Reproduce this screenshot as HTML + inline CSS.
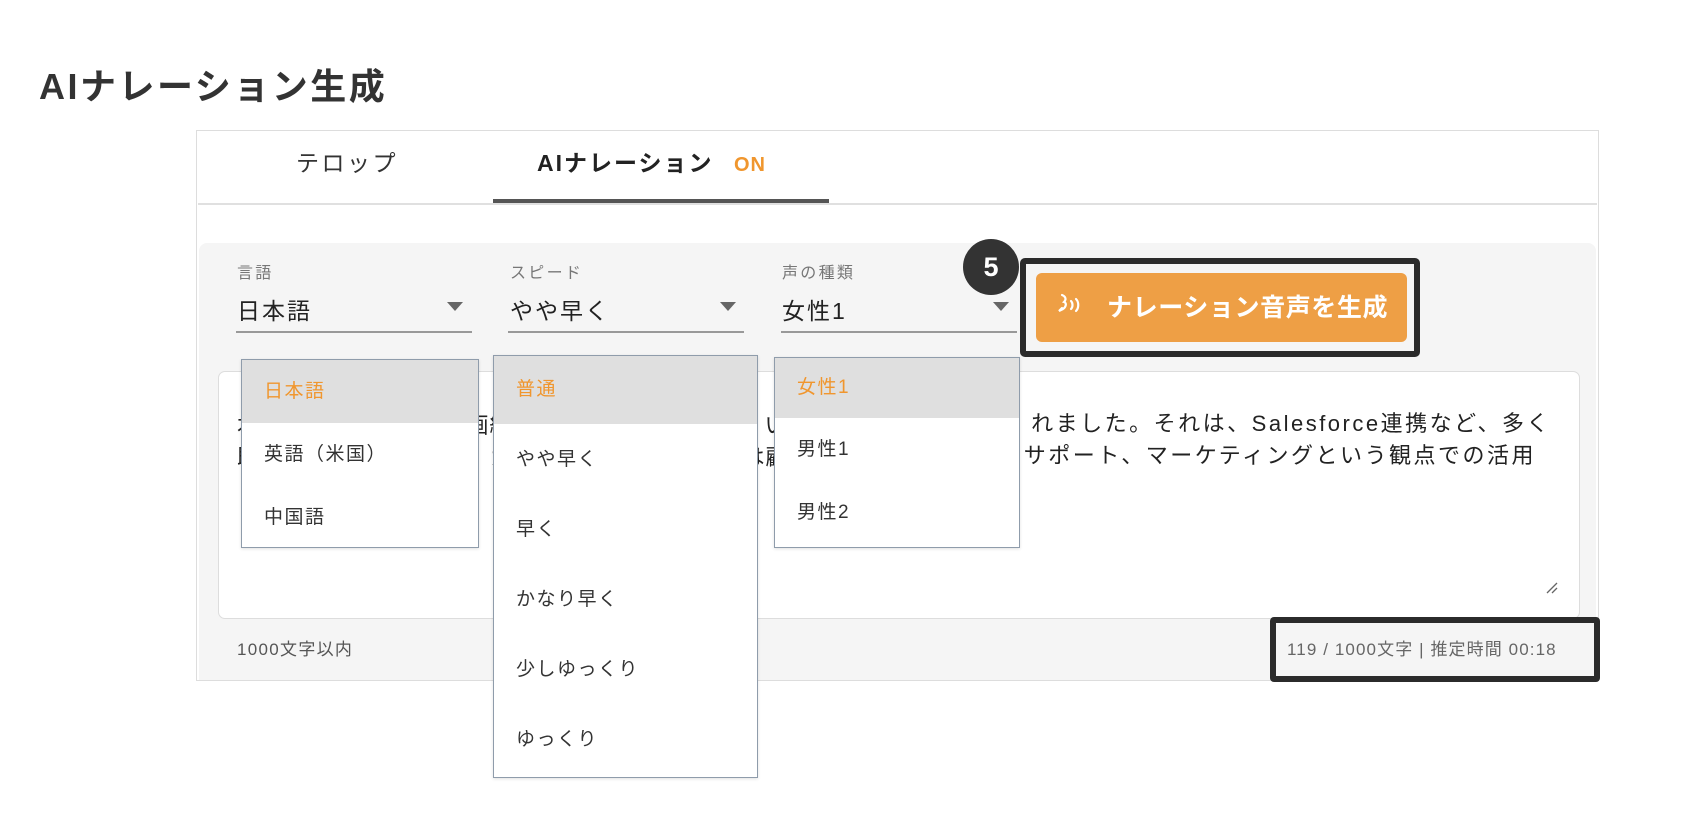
<!DOCTYPE html>
<html><head><meta charset="utf-8"><style>
*{box-sizing:border-box;margin:0;padding:0}
body{width:1694px;height:838px;background:#fff;position:relative;overflow:hidden;font-family:"Liberation Sans","Noto Sans CJK JP",sans-serif;color:#333}
.a{position:absolute;white-space:nowrap}
.dd{position:absolute;background:#fff;border:1px solid #8f9cab;box-shadow:0 1px 3px rgba(0,0,0,.12)}
.dd div{height:63px;line-height:63px;padding-left:22px;font-size:19px;letter-spacing:1.5px;color:#333}
.dd div.s{background:#dfdfdf;color:#f0962e}
.lbl{font-size:16px;color:#777;letter-spacing:2.3px}
.val{font-size:23px;color:#222;letter-spacing:2px}
.ul{position:absolute;height:2px;background:#999}
.tri{position:absolute;width:0;height:0;border-left:8px solid transparent;border-right:8px solid transparent;border-top:9px solid #666}
.tx{font-size:22px;color:#222;letter-spacing:1px}
.tr{font-size:22px;color:#222;letter-spacing:2.5px}
</style></head><body>
<div class="a" style="left:39px;top:58px;font-size:36px;font-weight:bold;color:#333;letter-spacing:2.5px">AIナレーション生成</div>

<div class="a" style="left:196px;top:130px;width:1403px;height:551px;border:1px solid #ddd"></div>
<div class="a" style="left:198px;top:203px;width:1399px;height:2px;background:#e0e0e0"></div>
<div class="a" style="left:296px;top:144px;font-size:23px;letter-spacing:2.5px">テロップ</div>
<div class="a" style="left:537px;top:144px;font-size:23px;font-weight:bold;color:#222;letter-spacing:2px">AIナレーション <span style="color:#f0962e;margin-left:12px;font-size:20px;letter-spacing:1px">ON</span></div>
<div class="a" style="left:493px;top:199px;width:336px;height:4px;background:#555"></div>

<div class="a" style="left:199px;top:243px;width:1397px;height:437px;background:#f5f5f5;border-radius:8px 8px 0 0"></div>

<div class="a lbl" style="left:237px;top:259px">言語</div>
<div class="a val" style="left:237px;top:292px">日本語</div>
<div class="ul" style="left:236px;top:331px;width:236px"></div>
<div class="tri" style="left:447px;top:302px"></div>

<div class="a lbl" style="left:510px;top:259px">スピード</div>
<div class="a val" style="left:510px;top:292px">やや早く</div>
<div class="ul" style="left:508px;top:331px;width:236px"></div>
<div class="tri" style="left:720px;top:302px"></div>

<div class="a lbl" style="left:782px;top:259px">声の種類</div>
<div class="a val" style="left:782px;top:292px">女性1</div>
<div class="ul" style="left:781px;top:331px;width:236px"></div>
<div class="tri" style="left:993px;top:302px"></div>

<div class="a" style="left:1020px;top:258px;width:400px;height:99px;border:6px solid #2b2b2b;border-radius:5px"></div>
<div class="a" style="left:1036px;top:273px;width:371px;height:69px;background:#ee9f45;border-radius:6px"></div>
<svg class="a" style="left:1056px;top:293px" width="32" height="24" viewBox="0 0 32 24" fill="none" stroke="#fff" stroke-width="2.2" stroke-linecap="round">
<path d="M6 2c3 1 5 4 2 7 3 1 2 5-1 7l-4 2 3-3"/><path d="M15 8c2 2 2 6 0 8"/><path d="M20 6c3 3 3 9 0 12"/></svg>
<div class="a" style="left:1107px;top:288px;font-size:25px;font-weight:bold;color:#fff;letter-spacing:0.6px">ナレーション音声を生成</div>

<div class="a" style="left:963px;top:239px;width:56px;height:56px;border-radius:50%;background:#333;color:#fff;font-size:27px;font-weight:bold;text-align:center;line-height:56px">5</div>

<div class="a" style="left:218px;top:371px;width:1362px;height:248px;background:#fff;border:1px solid #ddd;border-radius:7px"></div>
<div class="a tx" style="left:237px;top:408px">本日弊社より新しい動画編集機能がリリースされ、いち早く利用されました</div>
<div class="a tx" style="left:237px;top:440px">既に多くの企業におい、カスタマーサクセスなどは顧客対応、サ</div>
<div class="a tx" style="left:237px;top:472px">ます。</div>
<div class="a" style="left:1020px;top:400px;width:40px;height:80px;background:#fff"></div>
<div class="a tr" style="right:143px;top:406px;background:#fff;padding-left:2px">れました。それは、Salesforce連携など、多く</div>
<div class="a tr" style="right:158px;top:438px;background:#fff;padding-left:2px">サポート、マーケティングという観点での活用</div>
<svg class="a" style="left:1545px;top:581px" width="14" height="14"><path d="M2 12L12 2M7 12L12 7" stroke="#666" stroke-width="1.3"/></svg>

<div class="a" style="left:237px;top:635px;font-size:17px;color:#555;letter-spacing:1.3px">1000文字以内</div>
<div class="a" style="left:1270px;top:617px;width:330px;height:65px;border:6px solid #2b2b2b;border-radius:4px"></div>
<div class="a" style="left:1287px;top:635px;font-size:17px;color:#666;letter-spacing:1.1px">119 / 1000文字 | 推定時間 00:18</div>

<div class="dd" style="left:241px;top:359px;width:238px;height:189px"><div class="s">日本語</div><div>英語（米国）</div><div>中国語</div></div>
<div class="dd" style="left:493px;top:355px;width:265px;height:423px"><div class="s" style="height:68px;line-height:68px">普通</div><div style="height:71px;line-height:71px">やや早く</div><div style="height:70px;line-height:70px">早く</div><div style="height:70px;line-height:70px">かなり早く</div><div style="height:70px;line-height:70px">少しゆっくり</div><div style="height:70px;line-height:70px">ゆっくり</div></div>
<div class="dd" style="left:774px;top:357px;width:246px;height:191px"><div class="s" style="height:60px;line-height:60px">女性1</div><div>男性1</div><div>男性2</div></div>
</body></html>
